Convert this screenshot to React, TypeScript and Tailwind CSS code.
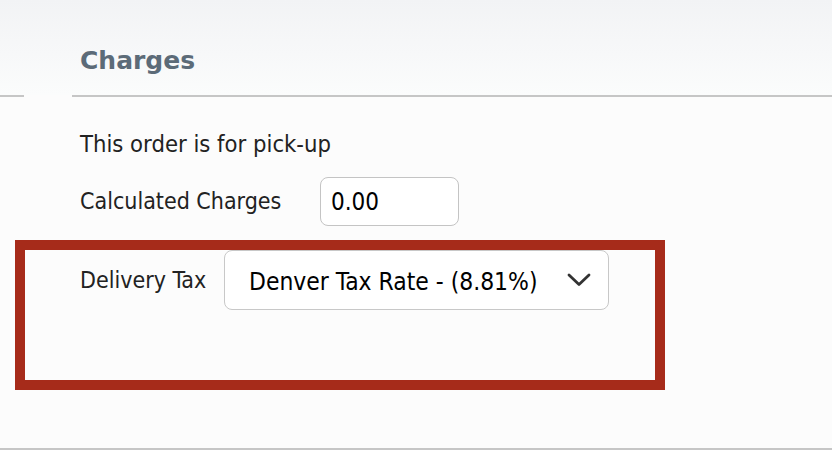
const font = { fontFamily: '"DejaVu Sans Condensed", "DejaVu Sans", Tahoma, sans-serif' }

function Chevron() {
  return (
    <svg width="24" height="14" viewBox="0 0 24 14" fill="none" className="text-[#333]">
      <polyline
        points="2,2 12,11.5 22,2"
        stroke="currentColor"
        strokeWidth="2.8"
        strokeLinecap="round"
        strokeLinejoin="round"
      />
    </svg>
  )
}

export default function App() {
  return (
    <div
      className="relative flex h-[450px] w-[832px] flex-col overflow-hidden bg-[#fcfcfc] text-[#222]"
      style={font}
    >
      {/* header */}
      <div className="h-[95px] bg-gradient-to-b from-[#f2f3f5] to-[#fbfcfc] pl-[80px] pt-[46px]">
        <h2
          className="text-[25px] leading-[30px] font-bold text-[#5c6b78]"
          style={{ fontFamily: '"DejaVu Sans", Tahoma, sans-serif' }}
        >
          Charges
        </h2>
      </div>
      <div className="flex h-[2px]">
        <div className="w-[24px] bg-[#c6c6c6]" />
        <div className="w-[48px]" />
        <div className="flex-1 bg-[#c6c6c6]" />
      </div>

      <div className="flex flex-1 flex-col pl-[80px] pt-[33px] text-[23px]">
        <p className="text-[23.6px] leading-[28px]">This order is for pick-up</p>

        <div className="mt-[19px] flex items-center">
          <span className="w-[240px]">Calculated Charges</span>
          <div className="flex h-[49px] w-[139px] items-center rounded-[8px] border-[1.5px] border-[#c4c4c4] bg-white pl-[10px] text-[24px] text-black">
            0.00
          </div>
        </div>

        <div className="mt-[24px] flex items-center">
          <span className="w-[144px]">Delivery Tax</span>
          <div className="flex h-[60px] w-[385px] items-center justify-between rounded-[8px] border-[1.5px] border-[#c8c8c8] bg-white pl-[24px] pr-[17px] text-[24.4px] text-black">
            <span className="pt-[4px]">Denver Tax Rate - (8.81%)</span>
            <Chevron />
          </div>
        </div>
      </div>

      <div className="h-[2px] bg-[#c6c6c6]" />

      {/* annotation box */}
      <div className="absolute left-[15px] top-[240px] h-[150px] w-[650px] border-[10px] border-[#a62b1a]" />
    </div>
  )
}
